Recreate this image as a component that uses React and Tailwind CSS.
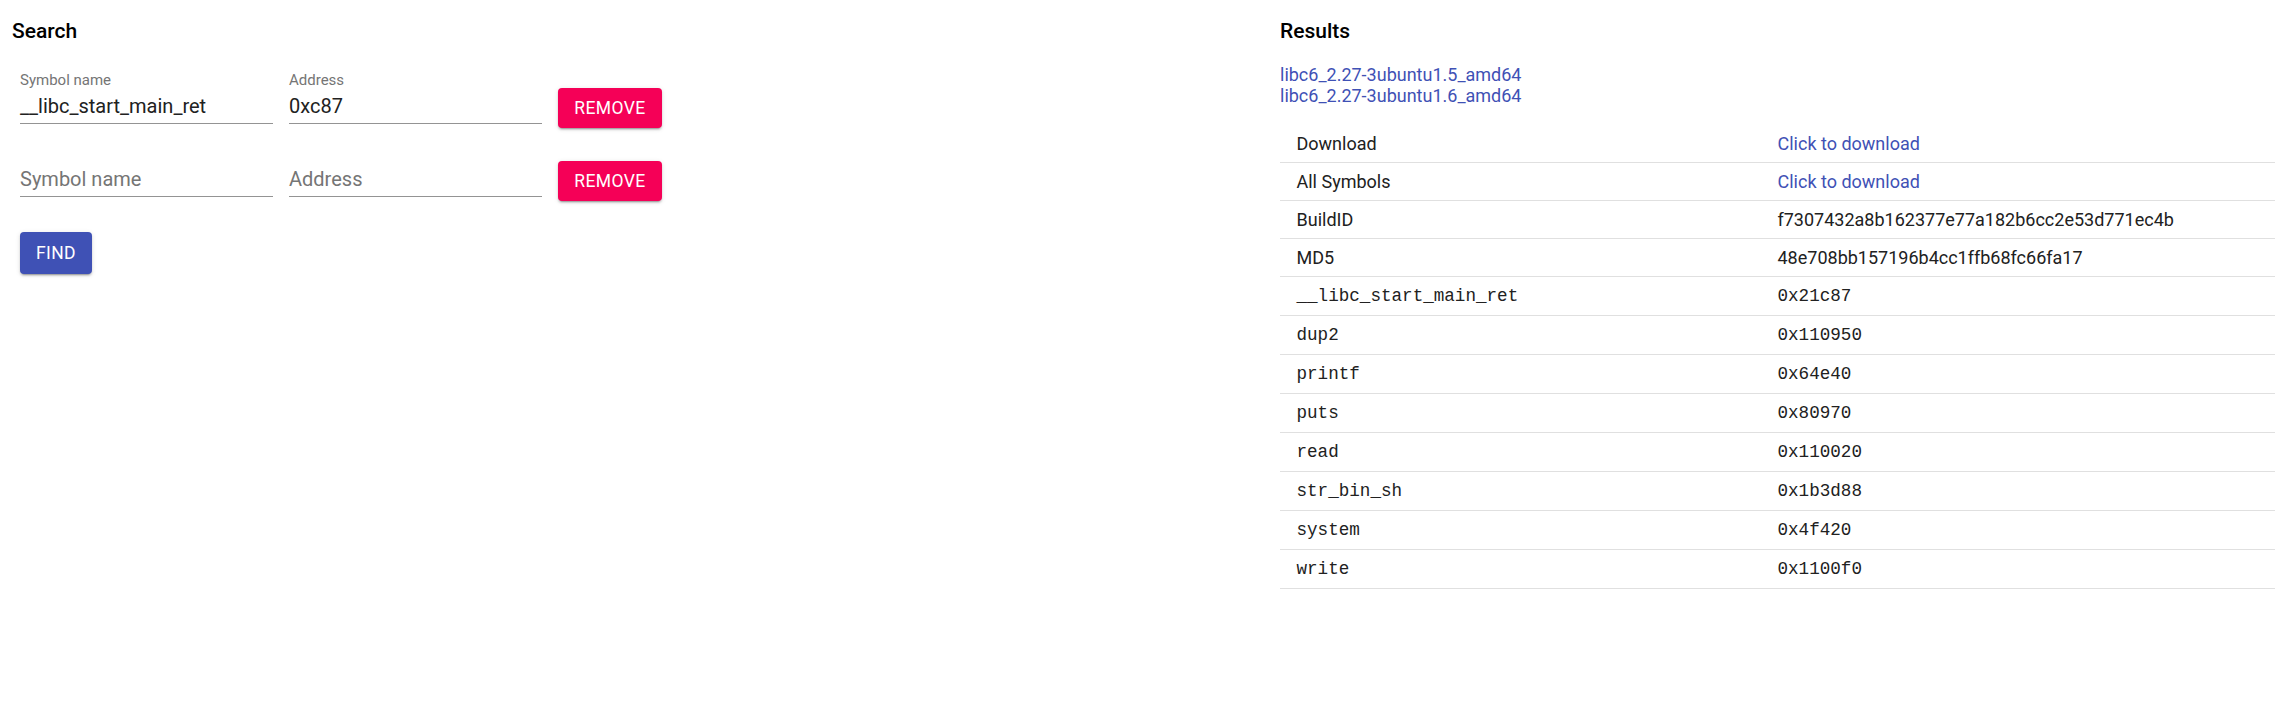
import React from "react";

const roboto = { fontFamily: "Roboto, 'Liberation Sans', sans-serif" };

function Field({ label, value, width = "w-[253px]" }) {
  const filled = value !== undefined && value !== "";
  return (
    <div className={`flex flex-col ${width}`}>
      <div className="h-[17px] text-[15px] leading-[17px] text-[#757575]">
        {filled ? label : ""}
      </div>
      <div className="pt-[5px] pb-[5px] border-b border-[#949494]">
        <div
          className={`h-[24px] text-[20px] leading-[24px] ${
            filled ? "text-[#212121]" : "text-[#757575]"
          }`}
        >
          {filled ? value : label}
        </div>
      </div>
    </div>
  );
}

function RemoveButton() {
  return (
    <button className="mt-[16px] flex h-[40px] w-[104px] items-center justify-center rounded-[4px] bg-[#f50057] text-[17.5px] font-normal uppercase tracking-[0.4px] text-white shadow-[0px_3px_1px_-2px_rgba(0,0,0,0.2),0px_2px_2px_0px_rgba(0,0,0,0.14),0px_1px_5px_0px_rgba(0,0,0,0.12)]">
      Remove
    </button>
  );
}

const rows = [
  { k: "Download", v: "Click to download", link: true },
  { k: "All Symbols", v: "Click to download", link: true },
  { k: "BuildID", v: "f7307432a8b162377e77a182b6cc2e53d771ec4b" },
  { k: "MD5", v: "48e708bb157196b4cc1ffb68fc66fa17" },
  { k: "__libc_start_main_ret", v: "0x21c87", mono: true },
  { k: "dup2", v: "0x110950", mono: true },
  { k: "printf", v: "0x64e40", mono: true },
  { k: "puts", v: "0x80970", mono: true },
  { k: "read", v: "0x110020", mono: true },
  { k: "str_bin_sh", v: "0x1b3d88", mono: true },
  { k: "system", v: "0x4f420", mono: true },
  { k: "write", v: "0x1100f0", mono: true },
];

export default function App() {
  return (
    <div
      className="flex min-h-[722px] w-full bg-white text-[#212121]"
      style={roboto}
    >
      {/* Left: Search */}
      <div className="flex w-[1280px] shrink-0 flex-col pl-[12px] pt-[14px]">
        <h6 className="text-[21px] font-medium leading-[34px] text-black">
          Search
        </h6>
        <div className="mt-[24px] flex flex-col gap-[17px] pl-[8px]">
          <div className="flex items-start gap-[16px]">
            <Field label="Symbol name" value="__libc_start_main_ret" />
            <Field label="Address" value="0xc87" />
            <RemoveButton />
          </div>
          <div className="flex items-start gap-[16px]">
            <Field label="Symbol name" />
            <Field label="Address" />
            <RemoveButton />
          </div>
        </div>
        <div className="mt-[31px] pl-[8px]">
          <button className="flex h-[42px] w-[72px] items-center justify-center rounded-[4px] bg-[#3f51b5] text-[17.5px] font-normal uppercase tracking-[0.4px] text-white shadow-[0px_3px_1px_-2px_rgba(0,0,0,0.2),0px_2px_2px_0px_rgba(0,0,0,0.14),0px_1px_5px_0px_rgba(0,0,0,0.12)]">
            Find
          </button>
        </div>
      </div>

      {/* Right: Results */}
      <div className="flex min-w-0 flex-1 flex-col pt-[14px]">
        <h6 className="text-[21px] font-medium leading-[34px] text-black">
          Results
        </h6>
        <div className="mt-[17px] flex flex-col text-[18px] leading-[20.7px] text-[#3f51b5]">
          <a className="w-fit cursor-pointer">libc6_2.27-3ubuntu1.5_amd64</a>
          <a className="w-fit cursor-pointer">libc6_2.27-3ubuntu1.6_amd64</a>
        </div>
        <div className="mt-[19px] flex flex-col">
          {rows.map((r) => (
            <div
              key={r.k}
              className={`grid grid-cols-[481px_1fr] items-center border-b border-[#e0e0e0] text-[18px] ${
                r.mono ? "h-[39px]" : "h-[38px]"
              }`}
            >
              <div
                className={`pl-[16.5px] ${
                  r.mono ? "font-['Liberation_Mono',monospace] text-[17.6px]" : ""
                }`}
              >
                {r.k}
              </div>
              <div
                className={`pl-[16.5px] ${
                  r.mono
                    ? "font-['Liberation_Mono',monospace] text-[17.6px]"
                    : ""
                } ${r.link ? "text-[#3f51b5]" : ""}`}
              >
                {r.v}
              </div>
            </div>
          ))}
        </div>
      </div>
    </div>
  );
}
